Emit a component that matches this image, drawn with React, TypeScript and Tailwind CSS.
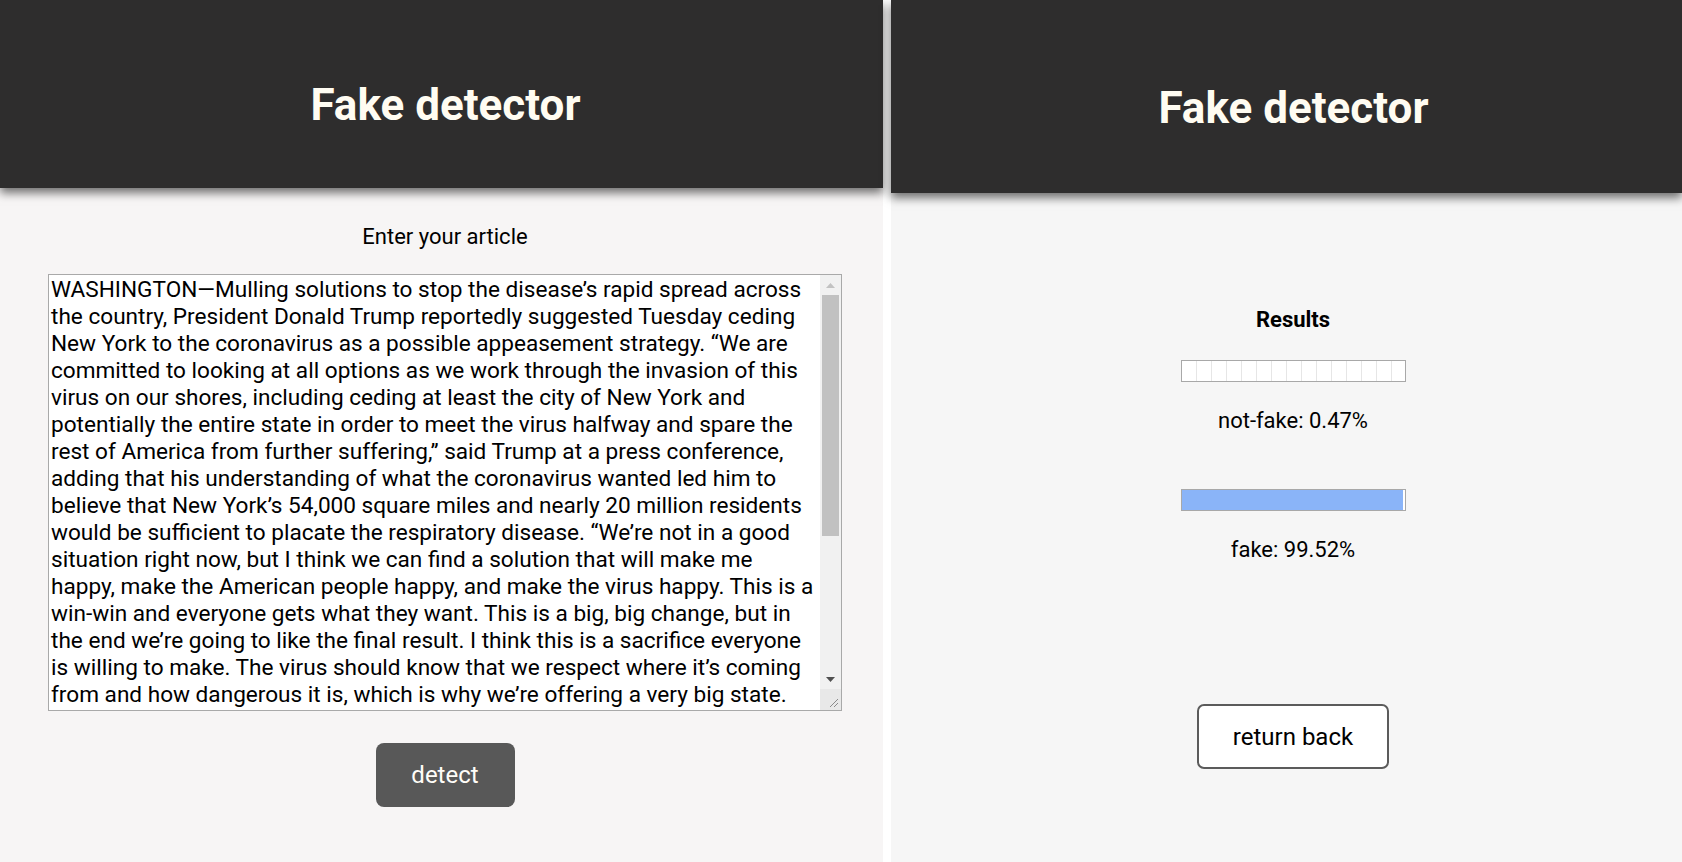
import React, { useState } from 'react';

const ARTICLE =
  'WASHINGTON\u2014Mulling solutions to stop the disease\u2019s rapid spread across the country, President Donald Trump reportedly suggested Tuesday ceding New York to the coronavirus as a possible appeasement strategy. \u201cWe are committed to looking at all options as we work through the invasion of this virus on our shores, including ceding at least the city of New York and potentially the entire state in order to meet the virus halfway and spare the rest of America from further suffering,\u201d said Trump at a press conference, adding that his understanding of what the coronavirus wanted led him to believe that New York\u2019s 54,000 square miles and nearly 20 million residents would be sufficient to placate the respiratory disease. \u201cWe\u2019re not in a good situation right now, but I think we can find a solution that will make me happy, make the American people happy, and make the virus happy. This is a win-win and everyone gets what they want. This is a big, big change, but in the end we\u2019re going to like the final result. I think this is a sacrifice everyone is willing to make. The virus should know that we respect where it\u2019s coming from and how dangerous it is, which is why we\u2019re offering a very big state. We\u2019re also looking at New Jersey, but that\u2019s not on the table yet. Believe me, nobody has ever made a deal like this before, nobody.\u201d At press time, Trump had reportedly expressed frustration after learning that the virus had rejected the offer and was continuing to spread into neighboring states, despite what the president described as a very generous and very fair proposal that many people were saying was the best proposal anyone had ever seen.';

const Header: React.FC<{ height: string; offset: string }> = ({ height, offset }) => (
  <header
    className={`relative z-10 ${height} ${offset} bg-[#2e2d2d] flex items-center justify-center pt-[22px] shadow-[0_5px_9px_rgba(0,0,0,0.55)]`}
  >
    <h1 className="text-[44px] font-bold text-[#fffcf2] leading-none">Fake detector</h1>
  </header>
);

const Meter: React.FC<{ value: number }> = ({ value }) => (
  <div className="w-[225px] h-[22px] border border-[#a8a8a8] bg-white bg-[image:repeating-linear-gradient(90deg,transparent_0,transparent_14px,#e6e6e6_14px,#e6e6e6_15px)]">
    {value >= 1 && <div className="h-full bg-[#8ab4f8]" style={{ width: `${value}%` }} />}
  </div>
);

const ScrollBar: React.FC = () => (
  <div className="w-[21px] flex flex-col bg-[#f1f1f1]">
    <div className="h-[20px] flex items-center justify-center">
      <svg width="9" height="5" viewBox="0 0 9 5"><path d="M0 5 L4.5 0 L9 5 Z" fill="#c2c2c2" /></svg>
    </div>
    <div className="flex-1">
      <div className="mx-[2px] h-[241px] bg-[#c1c1c1]" />
    </div>
    <div className="h-[20px] flex items-center justify-center">
      <svg width="9" height="5" viewBox="0 0 9 5"><path d="M0 0 L4.5 5 L9 0 Z" fill="#505050" /></svg>
    </div>
    <div className="h-[21px] bg-[#e8e8e8] flex items-end justify-end p-[2px]">
      <svg width="12" height="12" viewBox="0 0 12 12">
        <path d="M11 3 L3 11 M11 7 L7 11" stroke="#8a8a8a" strokeWidth="1" />
      </svg>
    </div>
  </div>
);

export default function App() {
  const [text, setText] = useState(ARTICLE);

  return (
    <div className="flex h-screen w-full bg-white text-black" style={{ fontFamily: 'Roboto, "Liberation Sans", sans-serif' }}>
      {/* input screen */}
      <section className="w-[883px] flex flex-col bg-[#f7f5f5]">
        <Header height="h-[188px]" offset="pl-[8px]" />
        <div className="flex flex-col items-center pl-[7px]">
          <p className="mt-[36px] text-[22px] leading-[26px]">Enter your article</p>
          <div className="mt-[24px] w-[794px] h-[437px] flex bg-white border border-[#a9a9a9]">
            <textarea
              value={text}
              onChange={e => setText(e.target.value)}
              spellCheck={false}
              className="flex-1 h-full resize-none overflow-hidden bg-white px-[2px] pt-[1px] text-[22.6px] leading-[27px] text-black outline-none"
            />
            <ScrollBar />
          </div>
          <button className="mt-[32px] w-[139px] h-[64px] rounded-[8px] bg-[#585858] text-[24px] text-[#fffdf8]">
            detect
          </button>
        </div>
      </section>

      {/* results screen */}
      <section className="ml-[8px] flex-1 flex flex-col bg-[#f6f6f6]">
        <Header height="h-[193px]" offset="pl-[14px]" />
        <div className="flex flex-col items-center pl-[13px]">
          <h2 className="mt-[114px] text-[22px] leading-[26px] font-bold">Results</h2>
          <div className="mt-[27px]">
            <Meter value={0.47} />
          </div>
          <p className="mt-[26px] text-[22px] leading-[26px]">not-fake: 0.47%</p>
          <div className="mt-[55px]">
            <Meter value={99.52} />
          </div>
          <p className="mt-[26px] text-[22px] leading-[26px]">fake: 99.52%</p>
          <button className="mt-[141px] w-[192px] h-[65px] rounded-[7px] border-2 border-[#5b5b5b] bg-white text-[24px] text-black">
            return back
          </button>
        </div>
      </section>
    </div>
  );
}
